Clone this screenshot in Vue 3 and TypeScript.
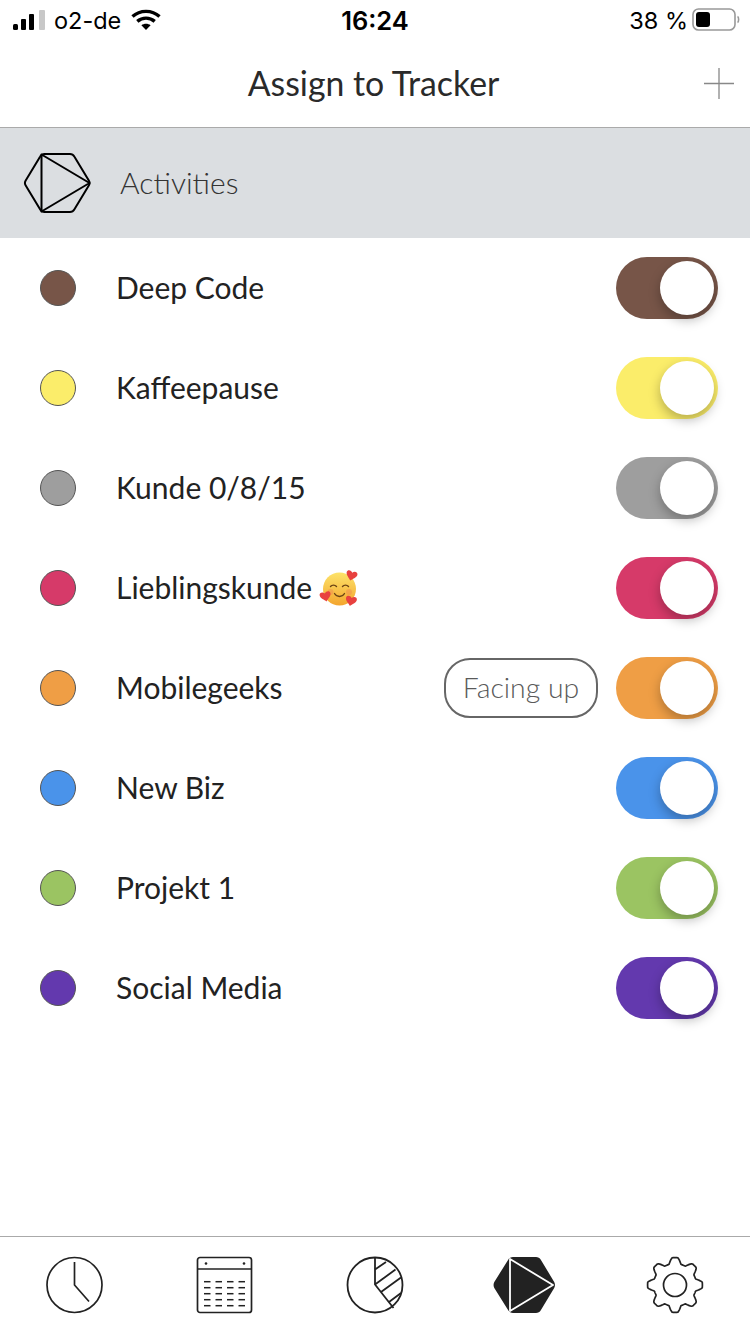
<script setup lang="ts">
interface Activity {
  name: string
  color: string
  emoji?: boolean
  badge?: string
}

const activities: Activity[] = [
  { name: 'Deep Code', color: '#775548' },
  { name: 'Kaffeepause', color: '#fbed6a' },
  { name: 'Kunde 0/8/15', color: '#9e9e9e' },
  { name: 'Lieblingskunde', color: '#d63a69', emoji: true },
  { name: 'Mobilegeeks', color: '#ef9e45', badge: 'Facing up' },
  { name: 'New Biz', color: '#4a93ea' },
  { name: 'Projekt 1', color: '#9bc462' },
  { name: 'Social Media', color: '#6339ae' }
]

const calendarRows = [26.7, 32.7, 38.7, 44.7, 50.7]
const calendarCols = [9, 20.5, 32, 43.5]

const heart = 'M0 6C-2 3.500-6.500 1-6.500-2.500-6.500-6-2-6.500 0-3.500 2-6.500 6.500-6 6.500-2.500 6.500 1 2 3.500 0 6z'

// gear outline, sampled around the circle
const gearPath = (): string => {
  const pts: string[] = []
  for (let deg = 0; deg < 360; deg += 2) {
    const a = (deg * Math.PI) / 180
    const wave = Math.max(-1, Math.min(1, 1.5 * Math.cos(8 * a)))
    const r = 24.4 + 3 * wave
    pts.push(`${(30 + r * Math.sin(a)).toFixed(2)} ${(30 - r * Math.cos(a)).toFixed(2)}`)
  }
  return 'M' + pts.join('L') + 'Z'
}
</script>

<template>
  <div class="page">
    <div class="status-bar">
      <div class="status-left">
        <svg class="signal" width="34" height="22" viewBox="0 0 34 22">
          <rect x="0" y="14" width="5" height="6" rx="1.500" fill="#000" />
          <rect x="8" y="9" width="5" height="11" rx="1" fill="#000" />
          <rect x="16" y="4" width="5" height="16" rx="1" fill="#000" />
          <rect x="26" y="0" width="6" height="20" rx="1" fill="#c8c8c8" />
        </svg>
        <span class="carrier">o2-de</span>
        <svg class="wifi" width="30" height="22" viewBox="0 0 30 22" fill="none" stroke="#000" stroke-width="3.400">
          <path d="M1.500 7.500C9 .6 21 .6 28.500 7.500" />
          <path d="M6.300 12.400c5-4.400 12.400-4.400 17.400 0" />
          <path d="M15 21l-4.600-4.700c2.600-2 6.600-2 9.200 0z" fill="#000" stroke="none" />
        </svg>
      </div>
      <span class="clock">16:24</span>
      <div class="status-right">
        <span class="percent">38 %</span>
        <svg width="48" height="24" viewBox="0 0 48 24" fill="none">
          <rect x="1" y="1" width="42" height="21" rx="5.500" stroke="#999" stroke-width="1.600" />
          <rect x="4" y="4" width="14" height="15" rx="3" fill="#000" />
          <path d="M45.500 8.500c1.500.6 1.500 5.400 0 6" stroke="#999" stroke-width="1.600" />
        </svg>
      </div>
    </div>

    <header class="nav-bar">
      <span></span>
      <h1 class="nav-title">Assign to Tracker</h1>
      <svg class="nav-plus" width="32" height="32" viewBox="0 0 32 32" stroke="#888" stroke-width="1.300">
        <path d="M1 15.500h30M16 0v31" />
      </svg>
    </header>

    <div class="section">
      <svg width="70" height="64" viewBox="0 0 70 64" fill="none" stroke="#000" stroke-width="2" stroke-linejoin="round">
        <path d="M21.500 3h25.500c1.800 0 3.400 .9 4.300 2.500l14.500 24c1 1.600 1 3.400 0 5L51.300 58.500c-.9 1.600-2.500 2.500-4.300 2.500H21.500c-1.800 0-3.400-.9-4.300-2.500L2.700 34.500c-1-1.600-1-3.400 0-5L17.200 5.500C18.100 3.900 19.700 3 21.500 3z" />
        <path d="M18.500 3.500L66.500 32 18.500 60.500z" />
      </svg>
      <span class="section-title">Activities</span>
    </div>

    <main class="list">
      <div v-for="item in activities" :key="item.name" class="row">
        <span class="dot" :style="{ background: item.color }"></span>
        <span class="label">{{ item.name }}</span>
        <svg v-if="item.emoji" class="emoji" width="40" height="40" viewBox="0 0 40 40">
          <defs>
            <linearGradient id="faceFill" x1="0" y1="0" x2="0" y2="1">
              <stop offset="0" stop-color="#fde36a" />
              <stop offset="1" stop-color="#f3a52e" />
            </linearGradient>
          </defs>
          <circle cx="20.500" cy="21" r="16.500" fill="url(#faceFill)" />
          <g fill="#f08a50" opacity="0.45">
            <circle cx="11.500" cy="24" r="3" />
            <circle cx="30" cy="24" r="3" />
          </g>
          <g fill="none" stroke="#6b4314" stroke-width="1.400" stroke-linecap="round">
            <path d="M11.500 18.500c1.500-1.800 4.500-1.800 6 0" />
            <path d="M23.500 18.500c1.500-1.800 4.500-1.800 6 0" />
            <path d="M15.500 25.500c2.500 4 7.500 4 10 0" />
          </g>
          <g fill="#e8413f">
            <path :d="heart" transform="translate(32.500 7.500) rotate(15) scale(0.85)" />
            <path :d="heart" transform="translate(6.500 28.500) rotate(-12) scale(0.85)" />
            <path :d="heart" transform="translate(32 33) rotate(12) scale(0.85)" />
          </g>
        </svg>
        <span v-if="item.badge" class="badge">{{ item.badge }}</span>
        <span class="toggle" :style="{ background: item.color }">
          <span class="thumb"></span>
        </span>
      </div>
    </main>

    <nav class="tab-bar">
      <div class="tab">
        <svg width="60" height="60" viewBox="0 0 60 60" fill="none" stroke="#222" stroke-width="1.700">
          <circle cx="29.500" cy="30" r="27.500" />
          <path d="M29.500 7v23l14.500 16.500" />
        </svg>
      </div>
      <div class="tab">
        <svg width="60" height="60" viewBox="0 0 60 60" fill="none" stroke="#222" stroke-width="1.700">
          <rect x="2.500" y="2.500" width="54" height="55" rx="2.500" />
          <path d="M2.500 14h54" />
          <circle cx="11" cy="8.500" r="1.300" fill="#222" stroke="none" />
          <circle cx="49" cy="8.500" r="1.300" fill="#222" stroke="none" />
          <g v-for="y in calendarRows" :key="y">
            <path v-for="x in calendarCols" :key="x" :d="`M${x} ${y}h6.500`" stroke-width="1.500" />
          </g>
        </svg>
      </div>
      <div class="tab">
        <svg width="60" height="60" viewBox="0 0 60 60" fill="none" stroke="#222" stroke-width="1.800">
          <circle cx="30" cy="30" r="27.500" />
          <path d="M30 2.500v27l18.500 23.500" />
          <path d="M30 14.500l11-7.500M30 29.500l20.500-15M36 37l20-14.500M44 47l12-9" />
        </svg>
      </div>
      <div class="tab">
        <svg width="64" height="60" viewBox="0 0 64 60">
          <path d="M20 2h23c2 0 3.800 1 4.800 2.700l13.400 22.300c1 1.800 1 4.200 0 6L47.800 55.300c-1 1.700-2.800 2.700-4.800 2.700H20c-2 0-3.800-1-4.800-2.700L1.300 33c-1-1.800-1-4.200 0-6L15.200 4.700C16.200 3 18 2 20 2z" fill="#222" />
          <path d="M17 4L60 30 17 56z" fill="none" stroke="#fff" stroke-width="1.800" stroke-linejoin="round" />
        </svg>
      </div>
      <div class="tab">
        <svg width="60" height="60" viewBox="0 0 60 60" fill="none" stroke="#222" stroke-width="1.700">
          <path :d="gearPath()" stroke-linejoin="round" />
          <circle cx="30" cy="30" r="11.500" />
        </svg>
      </div>
    </nav>
  </div>
</template>

<style>
html,
body {
  margin: 0;
  background: #ffffff;
}
</style>

<style scoped>
.page {
  display: flex;
  flex-direction: column;
  width: 750px;
  height: 1334px;
  overflow: hidden;
  background: #ffffff;
  font-family: Lato, "Open Sans", sans-serif;
  color: #222222;
}

.status-bar {
  display: grid;
  grid-template-columns: 1fr auto 1fr;
  align-items: center;
  height: 40px;
  padding: 0 13px;
  font-family: Inter, Roboto, sans-serif;
  font-size: 24px;
  color: #000000;
}

.status-left {
  display: flex;
  align-items: center;
}

.signal {
  margin-top: 2px;
}

.carrier {
  margin-left: 7px;
  font-size: 23.5px;
}

.wifi {
  margin-left: 10px;
}

.clock {
  font-size: 25.5px;
  font-weight: 600;
}

.status-right {
  display: flex;
  align-items: center;
  justify-content: flex-end;
  gap: 4px;
  margin-right: -3px;
}

.percent {
  font-size: 23.5px;
}

.nav-bar {
  display: grid;
  grid-template-columns: 1fr auto 1fr;
  align-items: center;
  height: 87px;
  border-bottom: 1px solid #aaaaaa;
  box-sizing: content-box;
}

.nav-title {
  margin: -2px 3px 0 0;
  font-size: 33.8px;
  font-weight: 400;
  color: #2a2a2a;
}

.nav-plus {
  justify-self: end;
  margin-right: 15px;
}

.section {
  display: flex;
  align-items: center;
  height: 110px;
  padding-left: 23px;
  background: #dbdee1;
}

.section-title {
  margin: -2px 0 0 27px;
  font-size: 30px;
  font-weight: 300;
  color: #333333;
}

.list {
  flex: 1;
}

.row {
  display: flex;
  align-items: center;
  height: 100px;
  padding: 0 32px 0 40px;
}

.dot {
  width: 36px;
  height: 36px;
  border: 1px solid #555555;
  border-radius: 50%;
  box-sizing: border-box;
  flex-shrink: 0;
}

.label {
  margin: -2px 0 0 40px;
  font-size: 30px;
  color: #222222;
}

.emoji {
  margin-left: 7px;
}

.badge {
  display: flex;
  align-items: center;
  justify-content: center;
  width: 154px;
  height: 60px;
  margin-left: auto;
  margin-right: 18px;
  padding-bottom: 2px;
  border: 2px solid #666666;
  border-radius: 26px;
  box-sizing: border-box;
  font-size: 28.4px;
  font-weight: 300;
  color: #5a5a5a;
}

.toggle {
  position: relative;
  width: 102px;
  height: 62px;
  margin-left: auto;
  border-radius: 31px;
  flex-shrink: 0;
}

.badge + .toggle {
  margin-left: 0;
}

.thumb {
  position: absolute;
  top: 4px;
  right: 4px;
  width: 54px;
  height: 54px;
  border-radius: 50%;
  background: #ffffff;
  box-shadow: 0 5px 12px rgba(0, 0, 0, 0.28);
}

.tab-bar {
  display: flex;
  height: 97px;
  border-top: 1px solid #aaaaaa;
}

.tab {
  display: flex;
  justify-content: center;
  width: 150px;
  padding-top: 18px;
}
</style>
